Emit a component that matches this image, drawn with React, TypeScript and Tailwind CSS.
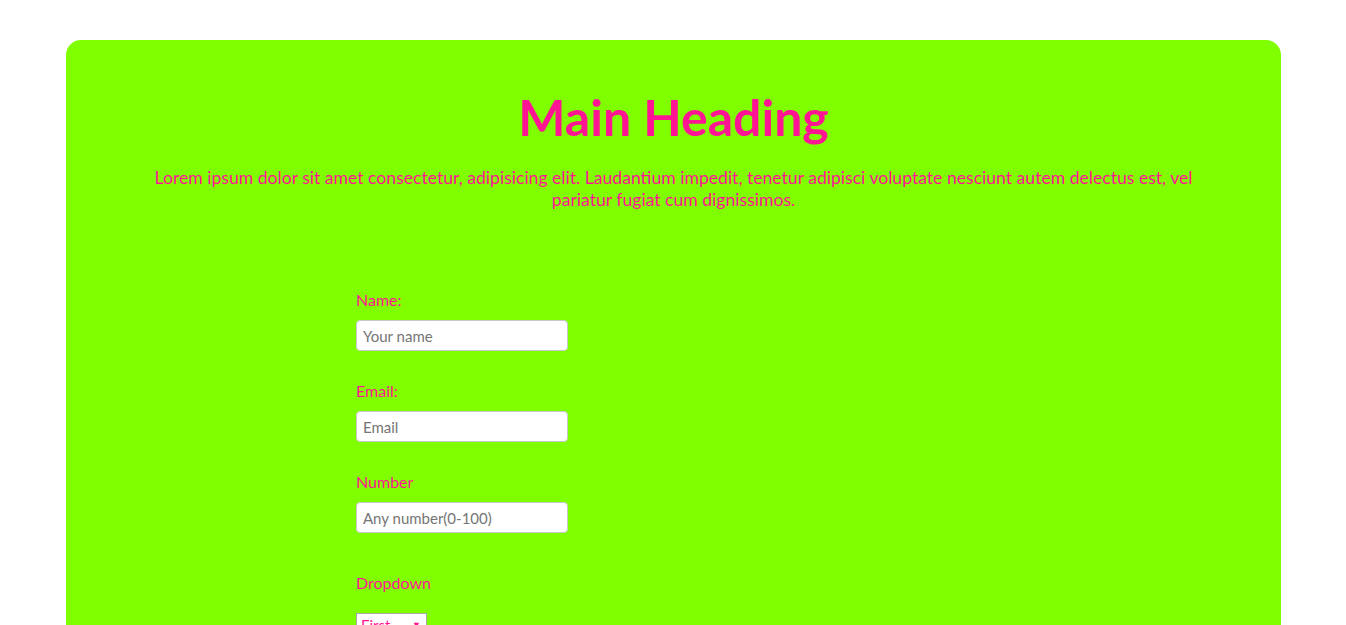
import React from 'react';

const font = { fontFamily: 'Lato, "Open Sans", sans-serif' };

const Field: React.FC<{ label: string; placeholder: string; type?: string }> = ({ label, placeholder, type = 'text' }) => (
  <div className="mb-[30px]">
    <label className="block text-[16px] leading-[20px] text-[#ff1493] mb-[10px]">{label}</label>
    <input
      type={type}
      placeholder={placeholder}
      className="w-[212px] h-[31px] px-[6px] bg-white border border-[#c8c8c8] rounded-[4px] text-[15px] text-gray-700 placeholder:text-[#757575] outline-none"
    />
  </div>
);

export default function App() {
  return (
    <div className="min-h-screen bg-white pl-[66px] pr-[65px] pt-[40px]" style={font}>
      <div className="bg-[#7fff00] rounded-t-[15px] min-h-[700px] pt-[47px] px-[78px]">
        <h1 className="text-center text-[50px] leading-[60px] font-bold text-[#ff1493] mb-[20px]">Main Heading</h1>
        <p className="text-center text-[17.6px] leading-[22px] text-[#ff1493]">
          Lorem ipsum dolor sit amet consectetur, adipisicing elit. Laudantium impedit, tenetur adipisci voluptate nesciunt autem delectus est, vel pariatur fugiat cum dignissimos.
        </p>
        <form className="pl-[212px] pt-[79px]">
          <Field label="Name:" placeholder="Your name" />
          <Field label="Email:" placeholder="Email" type="email" />
          <Field label="Number" placeholder="Any number(0-100)" type="number" />
          <div className="mt-[40px]">
            <label className="block text-[16px] leading-[20px] text-[#ff1493] mb-[20px]">Dropdown</label>
            <div className="relative w-[71px] h-[24px] bg-white border border-[#a9a9a9] text-[15px] text-[#ff1493] pl-[4px] flex items-center">
              First
              <span className="absolute right-[5px] top-[4px] text-[9px]">▼</span>
            </div>
          </div>
        </form>
      </div>
    </div>
  );
}
